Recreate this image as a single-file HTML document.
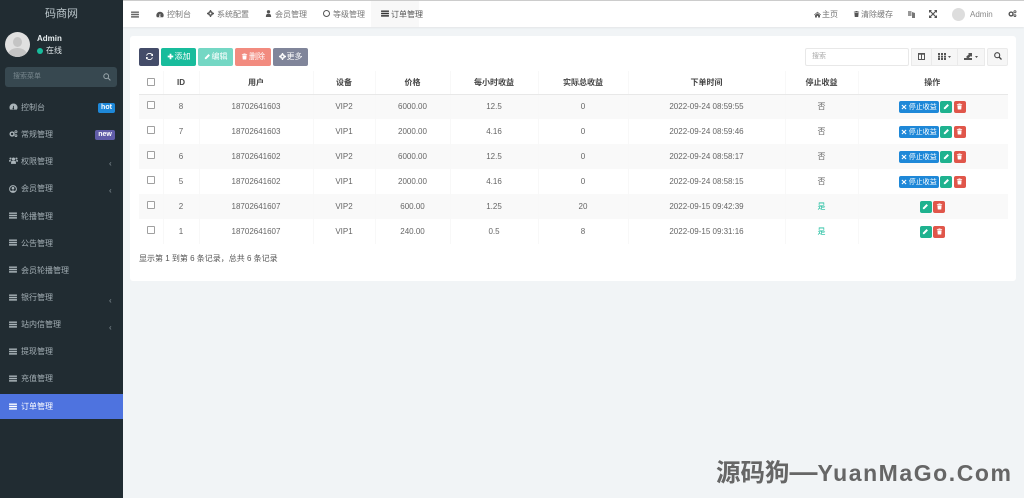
<!DOCTYPE html>
<html><head><meta charset="utf-8"><style>
*{box-sizing:border-box}
html,body{margin:0;padding:0;width:1024px;height:498px;overflow:hidden;background:#f1f4f6;font-family:"Liberation Sans","Noto Sans CJK SC",sans-serif;font-size:8px;color:#555}
#w{position:absolute;left:0;top:0;width:1024px;height:498px;filter:blur(.35px)}
.a{position:absolute;white-space:nowrap}
#side{position:absolute;left:0;top:0;width:123px;height:498px;background:#212c32}
#top{position:absolute;left:123px;top:0;width:901px;height:27px;background:#fff;border-top:1px solid #ccc;box-shadow:0 1px 2px rgba(0,0,0,.06)}
.m{position:absolute;left:21px;font-size:8px;color:#a4afb5;line-height:10px}
svg.i{position:absolute;overflow:visible}
.ch{position:absolute;left:109px;color:#8a969c;font-size:8px;line-height:8px}
.t{position:absolute;font-size:8px;color:#777;line-height:10px;top:9px}
#panel{position:absolute;left:130px;top:36px;width:886px;height:245px;background:#fff;border-radius:3px}
.b{position:absolute;top:48px;height:18px;border-radius:2px;color:#fff;font-size:8px;line-height:18px;text-align:center;white-space:nowrap}
.b svg{vertical-align:-1px;margin-right:1px}
.g{position:absolute;top:48px;height:18px;background:#f6f6f6;border:1px solid #eaeaea;color:#444;font-size:8px;line-height:16px;text-align:center}
table{position:absolute;left:139px;top:71px;width:869px;border-collapse:collapse;table-layout:fixed}
th,td{text-align:center;font-size:8px;padding:0;color:#666;font-weight:normal;border-right:1px solid #f8f8f8;overflow:hidden;white-space:nowrap}
th:last-child,td:last-child{border-right:0;padding-right:2px}
th{height:23px;color:#444;font-weight:bold;border-bottom:1px solid #e8e8e8;padding-top:1px}
td{height:25px}
tr.o td{background:#f9f9f9}
.cb{display:inline-block;width:8px;height:8px;border:1px solid #a0a0a0;border-radius:1px;background:#fff;vertical-align:middle;margin-top:-4px}
th .cb{margin-top:-2px}
.bt{display:inline-flex;align-items:center;justify-content:center;height:12px;border-radius:2px;color:#fff;font-size:7px;vertical-align:middle;margin-left:1.5px}
.bt:first-child{margin-left:0}
.s{background:#1e88d8;width:40px}.s svg{margin-right:2px}.e{background:#1fb28f;width:12px}.d{background:#e0564a;width:12px}
.yes{color:#18bc9c}
</style></head><body>
<svg width="0" height="0" style="position:absolute"><defs>
<symbol id="bars" viewBox="0 0 9 8"><path d="M0 .5h9v1.6H0zM0 3.2h9v1.6H0zM0 5.9h9v1.6H0z"/></symbol>
<symbol id="pen" viewBox="0 0 8 8"><path d="M1 5.4 5.2 1.2l1.6 1.6L2.6 7H1z"/></symbol>
<symbol id="trash" viewBox="0 0 8 8"><path d="M3 .6h2l.4.7H7v.8H1v-.8h1.6zM1.6 2.7h4.8L6 7.4H2z"/></symbol>
<symbol id="x" viewBox="0 0 8 8"><path d="M1.7.8 4 3l2.3-2.2 1 1L5 4l2.3 2.2-1 1L4 5 1.7 7.2l-1-1L3 4 .7 1.8z"/></symbol>
<symbol id="gauge" viewBox="0 0 10 8"><path d="M5 .5A4.6 4.6 0 0 0 .4 5c0 1 .3 1.9.8 2.5h7.6c.5-.6.8-1.5.8-2.5A4.6 4.6 0 0 0 5 .5zM4.5 3.5 5.5 3l-.2 2.6a.9.9 0 1 1-1 0z"/></symbol>
<symbol id="cogs" viewBox="0 0 10 8"><circle cx="3.4" cy="4.6" r="2.2" fill="none" stroke="currentColor" stroke-width="1.6"/><circle cx="7.8" cy="2" r="1.2" fill="none" stroke="currentColor" stroke-width="1"/><circle cx="7.8" cy="6.4" r="1.1" fill="none" stroke="currentColor" stroke-width="1"/></symbol>
<symbol id="users" viewBox="0 0 10 8"><circle cx="5" cy="2.4" r="1.8"/><circle cx="1.6" cy="1.8" r="1.2"/><circle cx="8.4" cy="1.8" r="1.2"/><path d="M2.5 4.4h5l.4 3.4H2.1zM0 3.4h2l-.3 2H0zM8 3.4h2v2H8.3z"/></symbol>
<symbol id="ucirc" viewBox="0 0 8 8"><circle cx="4" cy="4" r="3.4" fill="none" stroke="currentColor" stroke-width="1"/><circle cx="4" cy="3.2" r="1.3"/><path d="M1.8 6.5C2.2 5.2 5.8 5.2 6.2 6.5 5 7.6 3 7.6 1.8 6.5z"/></symbol>
<symbol id="cog" viewBox="0 0 8 8"><circle cx="4" cy="4" r="2" fill="none" stroke="currentColor" stroke-width="1.8"/><path d="M3.2 0h1.6v1.2H3.2zM3.2 6.8h1.6V8H3.2zM0 3.2h1.2v1.6H0zM6.8 3.2H8v1.6H6.8z"/></symbol>
<symbol id="user" viewBox="0 0 8 8"><circle cx="4" cy="2" r="1.9"/><path d="M1 8c0-3 1-3.7 3-3.7S7 5 7 8z"/></symbol>
<symbol id="home" viewBox="0 0 8 8"><path d="M4 .8 8 4.3l-.5.5L4 1.8.5 4.8 0 4.3zM1.2 4.8 4 2.5l2.8 2.3v2.6H4.7V5.6H3.3v1.8H1.2z"/></symbol>
<symbol id="refresh" viewBox="0 0 8 8"><path d="M6.6 2.4A3 3 0 0 0 1.2 3H.2a4 4 0 0 1 7-1.6L8 .6V3.4H5.2zM1.4 5.6A3 3 0 0 0 6.8 5h1a4 4 0 0 1-7 1.6L0 7.4V4.6h2.8z"/></symbol>
<symbol id="plus" viewBox="0 0 8 8"><path d="M3 .8h2V3h2.2v2H5v2.2H3V5H.8V3H3z"/></symbol>
</defs></svg>
<div id="w">
<div id="side">
<div style="position:absolute;left:0;top:0;width:123px;height:27px;text-align:center;font-size:11px;line-height:29px;color:#b9c4c9">码商网</div>
<div style="position:absolute;left:5px;top:32px;width:25px;height:25px;border-radius:50%;background:#e0e0e0;overflow:hidden"><div style="position:absolute;left:8px;top:5px;width:9px;height:10px;border-radius:50%;background:#c4c4c4"></div><div style="position:absolute;left:3px;top:16px;width:19px;height:14px;border-radius:50%;background:#c4c4c4"></div></div>
<div class="a" style="left:37px;top:34px;font-size:8px;font-weight:bold;color:#e8eef0;line-height:10px">Admin</div>
<div style="position:absolute;left:37px;top:48px;width:6px;height:6px;border-radius:50%;background:#18bc9c"></div>
<div class="a" style="left:46px;top:46px;font-size:8px;color:#dfe6e9;line-height:10px">在线</div>
<div style="position:absolute;left:5px;top:67px;width:112px;height:20px;border-radius:3px;background:#374850"></div>
<div class="a" style="left:13px;top:72px;font-size:7px;color:#77868d;line-height:10px">搜索菜单</div>
<svg style="position:absolute;left:103px;top:73px" width="8" height="8" viewBox="0 0 8 8"><circle cx="3.2" cy="3.2" r="2.4" fill="none" stroke="#9aa6ab" stroke-width="1"/><path d="M5 5l2.4 2.4" stroke="#9aa6ab" stroke-width="1"/></svg>

<svg class="i" style="left:9px;top:103px;color:#aab4b9" fill="#aab4b9" width="9" height="7"><use href="#gauge"/></svg><div class="m" style="top:103px">控制台</div>
<div class="a" style="left:98px;top:103px;width:17px;height:10px;background:#1e88d8;border-radius:2px;color:#fff;font-size:7px;font-weight:bold;text-align:center;line-height:10px">hot</div>
<svg class="i" style="left:9px;top:130px;color:#aab4b9" fill="#aab4b9" width="9" height="7"><use href="#cogs"/></svg><div class="m" style="top:130px">常规管理</div>
<div class="a" style="left:95px;top:130px;width:20px;height:10px;background:#605ca8;border-radius:2px;color:#fff;font-size:7px;font-weight:bold;text-align:center;line-height:10px">new</div>
<svg class="i" style="left:9px;top:157px;color:#aab4b9" fill="#aab4b9" width="9" height="7"><use href="#users"/></svg><div class="m" style="top:157px">权限管理</div><div class="ch" style="top:160px">‹</div>
<svg class="i" style="left:9px;top:185px;color:#aab4b9" fill="#aab4b9" width="8" height="8"><use href="#ucirc"/></svg><div class="m" style="top:184px">会员管理</div><div class="ch" style="top:187px">‹</div>
<svg class="i" style="left:9px;top:212px" fill="#aab4b9" width="8" height="7"><use href="#bars"/></svg><div class="m" style="top:212px">轮播管理</div>
<svg class="i" style="left:9px;top:239px" fill="#aab4b9" width="8" height="7"><use href="#bars"/></svg><div class="m" style="top:239px">公告管理</div>
<svg class="i" style="left:9px;top:266px" fill="#aab4b9" width="8" height="7"><use href="#bars"/></svg><div class="m" style="top:266px">会员轮播管理</div>
<svg class="i" style="left:9px;top:294px" fill="#aab4b9" width="8" height="7"><use href="#bars"/></svg><div class="m" style="top:293px">银行管理</div><div class="ch" style="top:297px">‹</div>
<svg class="i" style="left:9px;top:321px" fill="#aab4b9" width="8" height="7"><use href="#bars"/></svg><div class="m" style="top:320px">站内信管理</div><div class="ch" style="top:324px">‹</div>
<svg class="i" style="left:9px;top:348px" fill="#aab4b9" width="8" height="7"><use href="#bars"/></svg><div class="m" style="top:347px">提现管理</div>
<svg class="i" style="left:9px;top:375px" fill="#aab4b9" width="8" height="7"><use href="#bars"/></svg><div class="m" style="top:374px">充值管理</div>
<div style="position:absolute;left:0;top:394px;width:123px;height:25px;background:#4e73df"></div>
<svg class="i" style="left:9px;top:403px" fill="#fff" width="8" height="7"><use href="#bars"/></svg><div class="m" style="top:402px;color:#fff">订单管理</div>
</div>

<div id="top">
<svg class="i" style="left:8px;top:10px" fill="#666" width="8" height="7"><use href="#bars"/></svg>
<div style="position:absolute;left:248px;top:0;width:48px;height:26px;background:#f8f8f8"></div>
<svg class="i" style="left:33px;top:10px;color:#555" fill="#555" width="8" height="7"><use href="#gauge"/></svg><div class="t" style="left:44px">控制台</div>
<svg class="i" style="left:84px;top:9px;color:#555" fill="#555" width="7" height="7"><use href="#cog"/></svg><div class="t" style="left:94px">系统配置</div>
<svg class="i" style="left:142px;top:9px" fill="#555" width="7" height="7"><use href="#user"/></svg><div class="t" style="left:152px">会员管理</div>
<div style="position:absolute;left:200px;top:9px;width:7px;height:7px;border-radius:50%;border:1px solid #555"></div><div class="t" style="left:210px">等级管理</div>
<svg class="i" style="left:258px;top:9px" fill="#333" width="8" height="7"><use href="#bars"/></svg><div class="t" style="left:268px;color:#555">订单管理</div>
<svg class="i" style="left:691px;top:10px" fill="#555" width="7" height="7"><use href="#home"/></svg><div class="t" style="left:699px">主页</div>
<svg class="i" style="left:730px;top:9px" fill="#555" width="7" height="8"><use href="#trash"/></svg><div class="t" style="left:738px">清除缓存</div>
<svg class="i" style="left:785px;top:9px" width="8" height="8" viewBox="0 0 8 8"><path d="M0 1h3.5v5H0z" fill="#999"/><path d="M4 2l3 1v5H4z" fill="#777"/></svg>
<svg class="i" style="left:806px;top:9px" width="8" height="8" viewBox="0 0 8 8"><path d="M1 1l6 6M7 1L1 7" stroke="#555" stroke-width="1.2"/><path d="M0 0h3L0 3zM8 0v3L5 0zM0 8V5l3 3zM8 8H5l3-3z" fill="#555"/></svg>
<div style="position:absolute;left:829px;top:7px;width:13px;height:13px;border-radius:50%;background:#ddd"></div>
<div class="t" style="left:847px;color:#888">Admin</div>
<svg class="i" style="left:885px;top:9px;color:#555" fill="#555" width="9" height="7"><use href="#cogs"/></svg>
</div>

<div id="panel"></div>
<div class="b" style="left:139px;width:20px;background:#444c69"><svg width="7" height="7" fill="#fff" style="margin:0"><use href="#refresh"/></svg></div>
<div class="b" style="left:161px;width:35px;background:#18bc9c"><svg width="7" height="7" fill="#fff"><use href="#plus"/></svg>添加</div>
<div class="b" style="left:198px;width:35px;background:#74d7c4"><svg width="7" height="7" fill="#fff"><use href="#pen"/></svg>编辑</div>
<div class="b" style="left:235px;width:36px;background:#f28b7f"><svg width="7" height="7" fill="#fff"><use href="#trash"/></svg>删除</div>
<div class="b" style="left:273px;width:35px;background:#80859a;color:#fff"><svg width="7" height="7" fill="#fff" style="color:#fff"><use href="#cog"/></svg>更多</div>
<div class="a" style="left:805px;top:48px;width:104px;height:18px;border:1px solid #e8e8e8;border-radius:2px;color:#aaa;font-size:7px;line-height:16px;padding-left:6px;background:#fff">搜索</div>
<div class="g" style="left:911px;width:21px"><svg width="7" height="7" viewBox="0 0 7 7" style="vertical-align:-1px"><path d="M.5.5h6v6h-6zM3.5.5v6" fill="none" stroke="#555"/><path d="M.5.5h6v1.2h-6z" fill="#555"/></svg></div>
<div class="g" style="left:931px;width:27px"><svg width="13" height="7" viewBox="0 0 13 7" style="vertical-align:-1px"><path d="M0 0h2v2H0zM3 0h2v2H3zM6 0h2v2H6zM0 2.6h2v2H0zM3 2.6h2v2H3zM6 2.6h2v2H6zM0 5h2v2H0zM3 5h2v2H3zM6 5h2v2H6zM10 3h3l-1.5 2z" fill="#555"/></svg></div>
<div class="g" style="left:957px;width:28px"><svg width="14" height="8" viewBox="0 0 14 8" style="vertical-align:-1px"><path d="M0 6h8v2H0zM2 5l3-3-1-1h4v4L7 4 4 6.5zM11 4h3l-1.5 2z" fill="#555"/></svg></div>
<div class="g" style="left:987px;width:21px;border-radius:2px"><svg width="8" height="8" viewBox="0 0 8 8" style="vertical-align:-1px"><circle cx="3.2" cy="3.2" r="2.5" fill="none" stroke="#444" stroke-width="1.1"/><path d="M5 5l2.5 2.5" stroke="#444" stroke-width="1.3"/></svg></div>

<table>
<colgroup><col style="width:24px"><col style="width:36px"><col style="width:114px"><col style="width:62px"><col style="width:75px"><col style="width:88px"><col style="width:90px"><col style="width:157px"><col style="width:73px"><col style="width:150px"></colgroup>
<tr><th><span class="cb"></span></th><th>ID</th><th>用户</th><th>设备</th><th>价格</th><th>每小时收益</th><th>实际总收益</th><th>下单时间</th><th>停止收益</th><th>操作</th></tr>
<tr class="o"><td><span class="cb"></span></td><td>8</td><td>18702641603</td><td>VIP2</td><td>6000.00</td><td>12.5</td><td>0</td><td>2022-09-24 08:59:55</td><td>否</td><td><span class="bt s"><svg width="6" height="6" fill="#fff"><use href="#x"/></svg>停止收益</span><span class="bt e"><svg width="7" height="7" fill="#fff"><use href="#pen"/></svg></span><span class="bt d"><svg width="7" height="7" fill="#fff"><use href="#trash"/></svg></span></td></tr>
<tr><td><span class="cb"></span></td><td>7</td><td>18702641603</td><td>VIP1</td><td>2000.00</td><td>4.16</td><td>0</td><td>2022-09-24 08:59:46</td><td>否</td><td><span class="bt s"><svg width="6" height="6" fill="#fff"><use href="#x"/></svg>停止收益</span><span class="bt e"><svg width="7" height="7" fill="#fff"><use href="#pen"/></svg></span><span class="bt d"><svg width="7" height="7" fill="#fff"><use href="#trash"/></svg></span></td></tr>
<tr class="o"><td><span class="cb"></span></td><td>6</td><td>18702641602</td><td>VIP2</td><td>6000.00</td><td>12.5</td><td>0</td><td>2022-09-24 08:58:17</td><td>否</td><td><span class="bt s"><svg width="6" height="6" fill="#fff"><use href="#x"/></svg>停止收益</span><span class="bt e"><svg width="7" height="7" fill="#fff"><use href="#pen"/></svg></span><span class="bt d"><svg width="7" height="7" fill="#fff"><use href="#trash"/></svg></span></td></tr>
<tr><td><span class="cb"></span></td><td>5</td><td>18702641602</td><td>VIP1</td><td>2000.00</td><td>4.16</td><td>0</td><td>2022-09-24 08:58:15</td><td>否</td><td><span class="bt s"><svg width="6" height="6" fill="#fff"><use href="#x"/></svg>停止收益</span><span class="bt e"><svg width="7" height="7" fill="#fff"><use href="#pen"/></svg></span><span class="bt d"><svg width="7" height="7" fill="#fff"><use href="#trash"/></svg></span></td></tr>
<tr class="o"><td><span class="cb"></span></td><td>2</td><td>18702641607</td><td>VIP2</td><td>600.00</td><td>1.25</td><td>20</td><td>2022-09-15 09:42:39</td><td class="yes">是</td><td><span class="bt e"><svg width="7" height="7" fill="#fff"><use href="#pen"/></svg></span><span class="bt d"><svg width="7" height="7" fill="#fff"><use href="#trash"/></svg></span></td></tr>
<tr><td><span class="cb"></span></td><td>1</td><td>18702641607</td><td>VIP1</td><td>240.00</td><td>0.5</td><td>8</td><td>2022-09-15 09:31:16</td><td class="yes">是</td><td><span class="bt e"><svg width="7" height="7" fill="#fff"><use href="#pen"/></svg></span><span class="bt d"><svg width="7" height="7" fill="#fff"><use href="#trash"/></svg></span></td></tr>
</table>
<div class="a" style="left:139px;top:253px;font-size:8px;color:#555;line-height:11px">显示第 1 到第 6 条记录，总共 6 条记录</div>
<div class="a" style="left:716px;top:458px;font-size:24.5px;line-height:28px;font-weight:bold;color:#666">源码狗<span style="font-size:28px">—</span><span style="font-size:23px;letter-spacing:1.55px">YuanMaGo.Com</span></div>
</div>
</body></html>
